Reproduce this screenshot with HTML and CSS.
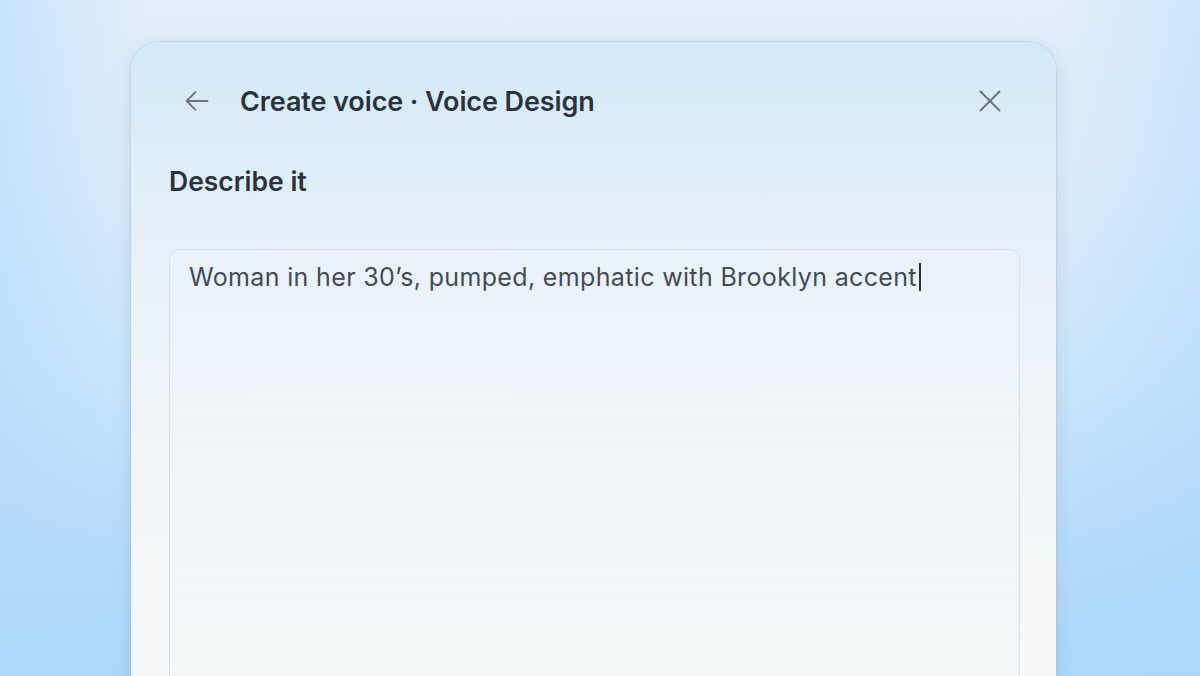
FILE: index.html
```html
<!DOCTYPE html>
<html lang="en">
<head>
<meta charset="utf-8">
<title>Create voice · Voice Design</title>
<link rel="stylesheet" href="styles.css">
</head>
<body>
<div class="stage">
  <section class="card">
    <header class="card-head">
      <button class="icon-btn back" aria-label="Back">
        <svg width="28" height="28" viewBox="0 0 24 24" fill="none" stroke="currentColor" stroke-width="1.6" stroke-linecap="round" stroke-linejoin="round"><path d="M21 12H3.2"/><path d="M10.6 4.4L3.2 12l7.4 7.6"/></svg>
      </button>
      <h1 class="title">Create voice · Voice Design</h1>
      <button class="icon-btn close" aria-label="Close">
        <svg width="24" height="24" viewBox="0 0 24 24" fill="none" stroke="currentColor" stroke-width="1.9" stroke-linecap="round"><path d="M2.5 2.5L21.5 21.5"/><path d="M21.5 2.5L2.5 21.5"/></svg>
      </button>
    </header>
    <h2 class="section-label">Describe it</h2>
    <div class="field">
      <p class="field-text">Woman in her 30’s, pumped, emphatic with Brooklyn accent<span class="caret"></span></p>
    </div>
  </section>
</div>
</body>
</html>
```
FILE: styles.css
```css
* { box-sizing: border-box; }
html, body { margin: 0; height: 100%; }
body {
  width: 1200px;
  height: 676px;
  overflow: hidden;
  font-family: Inter, "Noto Sans", sans-serif;
  background:
    linear-gradient(90deg, rgba(178,218,250,0.55) 0%, rgba(178,218,250,0) 12%, rgba(178,218,250,0) 88%, rgba(168,214,250,0.35) 100%),
    linear-gradient(180deg, #e2eefa 0%, #dcebf9 25%, #cbe5f9 55%, #b6dcfa 80%, #aad7fa 100%);
}
.stage {
  height: 100%;
  padding: 42px 144px 0 131px;
}
.card {
  height: 700px;
  border-radius: 28px;
  background: linear-gradient(180deg, #d3e9f9 0%, #e3eff8 25%, #eff4f8 50%, #f5f7f8 75%, #f6f7f8 100%);
  box-shadow: 0 0 0 1px rgba(160,190,215,0.35), 0 4px 18px rgba(90,130,170,0.2);
  padding: 30px 36px 0 38px;
  display: flex;
  flex-direction: column;
}
.card-head {
  display: flex;
  align-items: center;
  height: 58px;
}
.icon-btn {
  border: 0;
  background: none;
  padding: 0;
  display: flex;
  align-items: center;
  justify-content: center;
  color: #6c7480;
  width: 40px;
  height: 40px;
}
.back { margin-left: 8px; margin-right: 23px; }
.close { margin-left: auto; margin-right: 10px; }
.title {
  margin: 0;
  font-size: 27px;
  font-weight: 600;
  letter-spacing: -0.1px;
  color: #2a323c;
}
.section-label {
  margin: 36px 0 0 0;
  font-size: 26.5px;
  font-weight: 600;
  letter-spacing: 0;
  color: #2a323c;
  line-height: 1.2;
}
.field {
  margin-top: 51px;
  flex: 1;
  border: 1px solid rgba(205,218,230,0.75);
  border-bottom: 0;
  border-radius: 10px 10px 0 0;
  background: linear-gradient(180deg, rgba(236,244,250,0.5) 0%, rgba(245,247,248,0.6) 100%);
  padding: 10px 19px;
}
.field-text {
  margin: 0;
  font-size: 25px;
  line-height: 34px;
  color: #434b55;
  letter-spacing: 0.35px;
}
.caret {
  display: inline-block;
  width: 2px;
  height: 28px;
  background: #2a2f36;
  vertical-align: -5px;
  margin-left: 2px;
}
```
